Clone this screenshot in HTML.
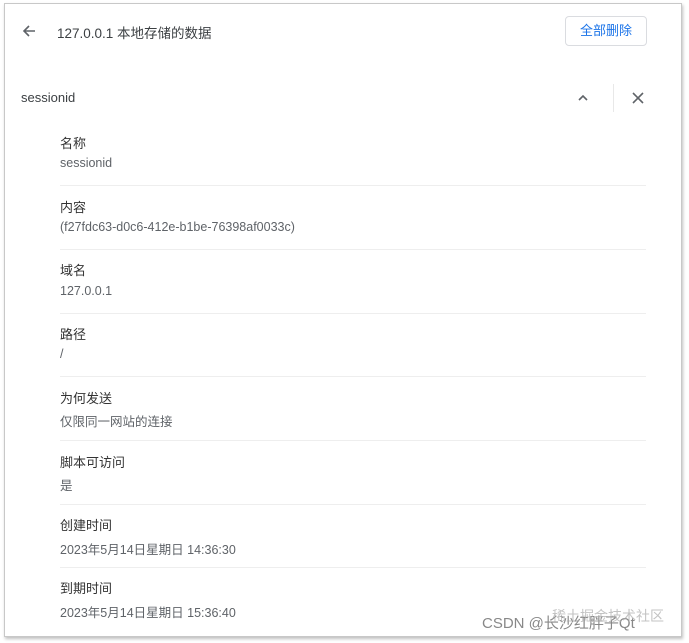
<!DOCTYPE html><html><head><meta charset="utf-8"><style>
body{margin:0;width:689px;height:643px;background:#fff;font-family:"Liberation Sans","Noto Sans CJK SC",sans-serif;position:relative;overflow:hidden}
.frame{position:absolute;left:4px;top:3px;width:676px;height:632px;border:1px solid #c8c8c8;box-shadow:1px 2px 3px rgba(0,0,0,.25)}
.a{position:absolute;white-space:nowrap}
.lab{font-size:13px;color:#333;left:60px}
.val{font-size:12.5px;color:#5f6368;left:60px}
.sep{position:absolute;left:60px;width:586px;height:1px;background:#eee}
</style></head><body>
<div class="frame"></div>
<svg class="a" style="left:21px;top:23px" width="16" height="16" viewBox="0 0 16 16"><path d="M14 8H3M8 3L3 8l5 5" stroke="#5f6368" stroke-width="1.6" fill="none"/></svg>
<div class="a" style="left:57px;top:22px;font-size:13.5px;color:#3c4043">127.0.0.1 本地存储的数据</div>
<div class="a" style="left:565px;top:16px;width:82px;height:30px;border:1px solid #dadce0;border-radius:4px;box-sizing:border-box;color:#1a73e8;font-size:13px;text-align:center;line-height:28px">全部删除</div>
<div class="a" style="left:21px;top:90px;font-size:13px;color:#3c4043">sessionid</div>
<svg class="a" style="left:577px;top:93px" width="12" height="10" viewBox="0 0 12 10"><path d="M2 7l4-4 4 4" stroke="#5f6368" stroke-width="1.6" fill="none"/></svg>
<div class="a" style="left:613px;top:84px;width:1px;height:28px;background:#e8e8e8"></div>
<svg class="a" style="left:631px;top:91px" width="14" height="14" viewBox="0 0 14 14"><path d="M2 2l10 10M12 2L2 12" stroke="#5f6368" stroke-width="1.6"/></svg>

<div class="a lab" style="top:133px">名称</div><div class="a val" style="top:156px">sessionid</div><div class="sep" style="top:185px"></div>
<div class="a lab" style="top:197px">内容</div><div class="a val" style="top:220px">(f27fdc63-d0c6-412e-b1be-76398af0033c)</div><div class="sep" style="top:249px"></div>
<div class="a lab" style="top:260px">域名</div><div class="a val" style="top:284px">127.0.0.1</div><div class="sep" style="top:313px"></div>
<div class="a lab" style="top:324px">路径</div><div class="a val" style="top:347px">/</div><div class="sep" style="top:376px"></div>
<div class="a lab" style="top:388px">为何发送</div><div class="a val" style="top:411px">仅限同一网站的连接</div><div class="sep" style="top:440px"></div>
<div class="a lab" style="top:452px">脚本可访问</div><div class="a val" style="top:475px">是</div><div class="sep" style="top:504px"></div>
<div class="a lab" style="top:515px">创建时间</div><div class="a val" style="top:539px">2023年5月14日星期日 14:36:30</div><div class="sep" style="top:567px"></div>
<div class="a lab" style="top:578px">到期时间</div><div class="a val" style="top:602px">2023年5月14日星期日 15:36:40</div>
<div class="a" style="left:482px;top:612px;font-size:15px;color:#888">CSDN @长沙红胖子Qt</div>
<div class="a" style="left:552px;top:606px;font-size:14px;color:#aaa;opacity:.7">稀土掘金技术社区</div>
</body></html>
